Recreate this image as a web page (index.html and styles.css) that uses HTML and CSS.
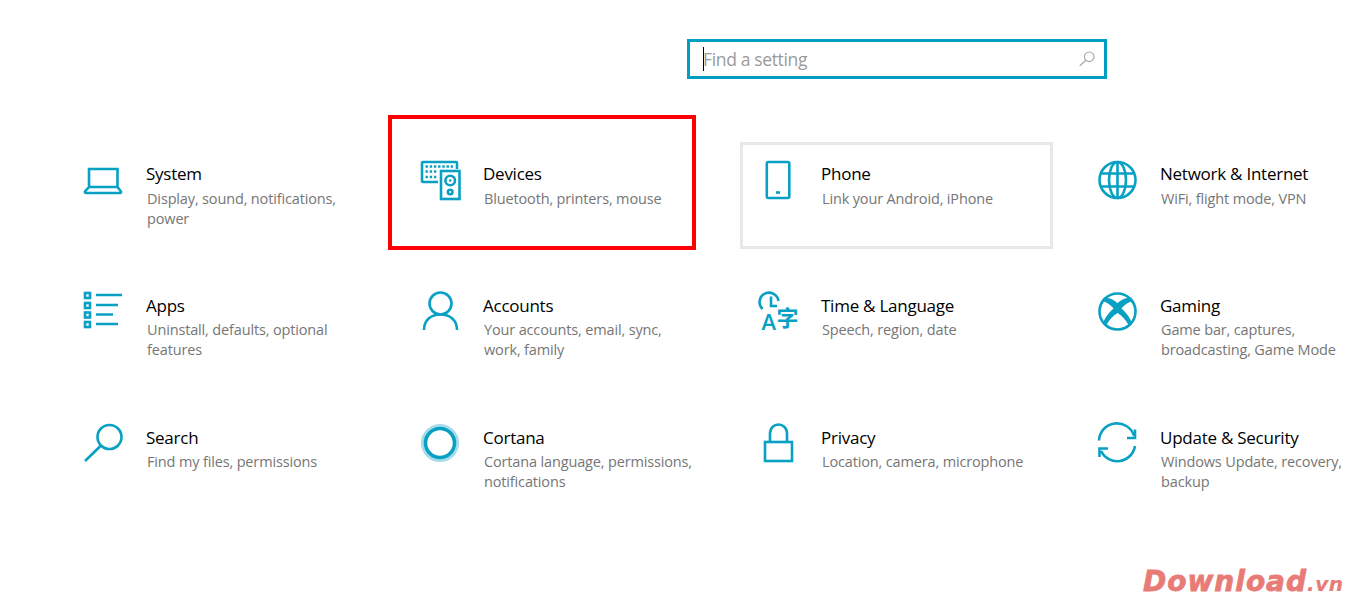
FILE: index.html
```html
<!DOCTYPE html>
<html lang="en">
<head>
<meta charset="utf-8">
<title>Settings</title>
<link rel="stylesheet" href="styles.css">
</head>
<body>
<div class="page">
  <header class="search-row">
    <div class="search-box">
      <span class="caret"></span>
      <span class="placeholder">Find a setting</span>
      <svg class="search-icon" viewBox="0 0 16 16"><circle cx="10.2" cy="5.8" r="4.8"/><path d="M6.8 9.2 L0.6 15"/></svg>
    </div>
  </header>
  <main class="grid">
    <section class="card">
      <svg class="icon" viewBox="0 0 40 40"><path d="M5 25 V8 H33.5 V25"/><path d="M5 26 H33.5 L37 30.5 Q37.5 32 36 32 H2 Q0.500 32 1 30.500 Z"/></svg>
      <div class="text"><h2>System</h2><p>Display, sound, notifications, power</p></div>
    </section>
    <section class="card">
      <svg class="icon" viewBox="0 0 40 40">
        <path d="M16 21 H1 Q0 21 0 20 V2 Q0 1 1 1 H34 Q35 1 35 2 V8"/>
        <path class="dots" d="M3.500 5.500 H31 M3.500 10.500 H16 M3.500 16 H16"/>
        <rect x="19" y="10" width="18.500" height="28"/>
        <circle cx="28.200" cy="19.500" r="4.800"/><circle class="solid" cx="28.200" cy="19.500" r="1.300"/>
        <circle cx="28.200" cy="31" r="2.300"/>
      </svg>
      <div class="text"><h2>Devices</h2><p>Bluetooth, printers, mouse</p></div>
    </section>
    <section class="card card-hover">
      <svg class="icon" viewBox="0 0 40 40"><rect x="6.800" y="1" width="22.500" height="36" rx="1.500"/><path d="M16 31.500 H20"/></svg>
      <div class="text"><h2>Phone</h2><p>Link your Android, iPhone</p></div>
    </section>
    <section class="card">
      <svg class="icon" viewBox="0 0 40 40"><circle cx="19.500" cy="19" r="18"/><ellipse cx="19.500" cy="19" rx="8.500" ry="18"/><path d="M19.500 1 V37 M3.500 12.500 H35.500 M3.500 25.500 H35.500"/></svg>
      <div class="text"><h2>Network &amp; Internet</h2><p>WiFi, flight mode, VPN</p></div>
    </section>

    <section class="card">
      <svg class="icon" viewBox="0 0 40 40">
        <rect x="1" y="0" width="5" height="5"/><rect x="1" y="10" width="5" height="5"/><rect x="1" y="19.500" width="5" height="5"/><rect x="1" y="29" width="5" height="5"/>
        <path d="M12 2 H38 M12 12 H34 M12 21.500 H29 M12 31 H34"/>
      </svg>
      <div class="text"><h2>Apps</h2><p>Uninstall, defaults, optional features</p></div>
    </section>
    <section class="card">
      <svg class="icon" viewBox="0 0 40 40"><circle cx="18.500" cy="10.500" r="11"/><path d="M2 37 C2 27 9 21.500 18.500 21.500 C28 21.500 35 27 35 37"/></svg>
      <div class="text"><h2>Accounts</h2><p>Your accounts, email, sync, work, family</p></div>
    </section>
    <section class="card">
      <svg class="icon" viewBox="0 0 40 40">
        <path d="M2.500 16 A9.500 9.500 0 1 1 18.500 8"/><path d="M11 3.500 V13 H17"/>
        <text class="icon-a" x="1.500" y="37">A</text><text class="icon-zi" x="16.500" y="33">字</text>
      </svg>
      <div class="text"><h2>Time &amp; Language</h2><p>Speech, region, date</p></div>
    </section>
    <section class="card">
      <svg class="icon" viewBox="0 0 40 40">
        <circle cx="19.500" cy="18.500" r="18"/>
        <path class="solid" d="M5.500 5 C11 4 15.500 7 19.500 10 C23.500 7 28 4 33.500 5 L35 8 C30 9 26 12.500 23.500 15.500 C28.500 20 33 26 34 31 L31 33 C28 27 24 22.500 19.500 20 C15 22.500 11 27 8 33 L5 31 C6 26 10.500 20 15.500 15.500 C13 12.500 9 9 4 8 Z"/>
      </svg>
      <div class="text"><h2>Gaming</h2><p>Game bar, captures, broadcasting, Game Mode</p></div>
    </section>

    <section class="card">
      <svg class="icon" viewBox="0 0 40 40"><circle cx="25.500" cy="12" r="12"/><path d="M17 20.500 L1 36"/></svg>
      <div class="text"><h2>Search</h2><p>Find my files, permissions</p></div>
    </section>
    <section class="card">
      <svg class="icon" viewBox="0 0 40 40"><circle class="halo" cx="18" cy="18" r="17.500"/><circle class="ring" cx="18" cy="18" r="14.500"/></svg>
      <div class="text"><h2>Cortana</h2><p>Cortana language, permissions, notifications</p></div>
    </section>
    <section class="card">
      <svg class="icon" viewBox="0 0 40 40"><rect x="5" y="17" width="27" height="19"/><path d="M10 17 V8 A8.500 8.500 0 0 1 27 8 V17"/></svg>
      <div class="text"><h2>Privacy</h2><p>Location, camera, microphone</p></div>
    </section>
    <section class="card">
      <svg class="icon" viewBox="0 0 40 40">
        <path d="M1 15.500 A18 18 0 0 1 36 10.500"/><path d="M37 4.500 V13 H29"/>
        <path d="M37 21 A18 18 0 0 1 3 26"/><path d="M1.500 32 V23.500 H10"/>
      </svg>
      <div class="text"><h2>Update &amp; Security</h2><p>Windows Update, recovery, backup</p></div>
    </section>
  </main>
  <div class="highlight"></div>
  <div class="watermark">Download<span>.vn</span></div>
</div>
</body>
</html>
```
FILE: styles.css
```css
* { box-sizing: border-box; }
html, body { margin: 0; background: #fff; }
.page {
  position: relative;
  width: 1354px;
  height: 597px;
  overflow: hidden;
  font-family: "Open Sans", "Noto Sans", sans-serif;
}
.search-row { padding: 39px 0 0 687px; }
.search-box {
  width: 420px;
  height: 40px;
  border: 3px solid #009fc1;
  display: flex;
  align-items: center;
  padding: 0 9px 0 13px;
}
.caret { width: 1px; height: 24px; background: #000; flex: none; }
.placeholder {
  flex: 1;
  margin: -1px 0 0 -1px;
  font-size: 17.5px;
  letter-spacing: -0.35px;
  color: #9a9a9a;
}
.search-icon { width: 16px; height: 16px; fill: none; stroke: #a8a8a8; stroke-width: 1.2; }

.grid {
  display: grid;
  grid-template-columns: repeat(4, 313px);
  grid-auto-rows: 108px;
  column-gap: 25px;
  row-gap: 24px;
  padding: 62px 0 0 64px;
}
.card {
  display: flex;
  gap: 22px;
  padding: 17px;
  border: 3px solid transparent;
}
.card:nth-child(4n+2), .card:nth-child(4n+3) { gap: 21px; }
.card-hover {
  margin-top: 1px;
  padding-top: 16px;
  border-color: #e8e8e8;
}
.icon {
  flex: none;
  width: 40px;
  height: 40px;
  overflow: visible;
  fill: none;
  stroke: #08a0c3;
  stroke-width: 2.6;
}
.icon .solid { fill: #08a0c3; stroke: none; }
.icon .dots { stroke-dasharray: 2.400 1.800; }
.icon .halo { stroke: #a6dce8; stroke-width: 3; }
.icon .ring { stroke-width: 3.6; }
.icon-a, .icon-zi { fill: #08a0c3; stroke: none; }
.icon-a { font: 600 22px "Open Sans", sans-serif; }
.icon-zi { font: 700 22px "Noto Sans CJK SC", sans-serif; }
.text { min-width: 0; }
h2 {
  margin: 0;
  font-size: 17px;
  font-weight: 400;
  letter-spacing: -0.25px;
  line-height: 26px;
  color: #000;
}
p {
  margin: 1px 0 0;
  padding-left: 1px;
  width: 212px;
  font-size: 14.5px;
  letter-spacing: -0.15px;
  line-height: 20px;
  color: #767676;
}
.card:nth-child(-n+4) p { margin-top: 2px; }
.highlight {
  position: absolute;
  left: 388px;
  top: 115px;
  width: 308px;
  height: 135px;
  border: 4px solid #ff0000;
}
.watermark {
  position: absolute;
  left: 1143px;
  top: 565px;
  font: italic 700 28px "DejaVu Sans", sans-serif;
  letter-spacing: 1px;
  color: #e87b76;
  -webkit-text-stroke: 0.8px #e87b76;
}
.watermark span { font-size: 20px; letter-spacing: 0.5px; -webkit-text-stroke: 0.2px #e87b76; }
```
